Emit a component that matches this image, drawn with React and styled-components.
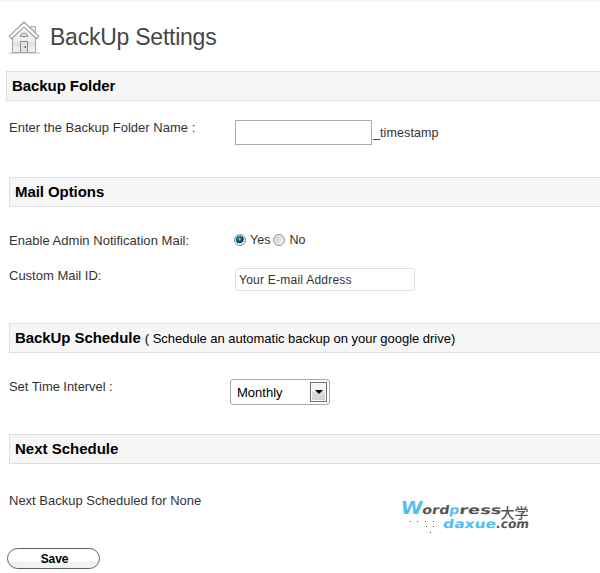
import React from 'react';
import styled, { createGlobalStyle } from 'styled-components';

const GlobalStyle = createGlobalStyle`
  body { margin: 0; background: #fff; overflow: hidden; }
  *, *::before, *::after { box-sizing: border-box; }
`;

const Page = styled.main`
  position: relative;
  width: 600px;
  height: 573px;
  overflow: hidden;
  border-top: 1px solid #f4f4f4;
  background: #fff;
  color: #333;
  font: 13px/16px "Liberation Sans", Arial, sans-serif;
`;

const Header = styled.header`
  display: flex;
  height: 70px;
  padding-left: 8px;
`;

const HouseIcon = styled.svg`
  flex: none;
  width: 33px;
  height: 33px;
  margin-top: 20px;
`;

const Title = styled.h1`
  margin: 21px 0 0 9px;
  color: #464646;
  font-size: 23px;
  line-height: 30px;
  font-weight: 400;
  letter-spacing: -0.24px;
  white-space: nowrap;
`;

const SectionBar = styled.h2`
  height: 30px;
  margin: 0 -2px 0 ${({ $indent = 9 }) => $indent}px;
  padding-left: 5px;
  border: 1px solid #dfdfdf;
  background: #f6f6f6;
  color: #000;
  font-size: 15px;
  line-height: 28px;
  font-weight: 700;
  letter-spacing: ${({ $tracking = -0.07 }) => $tracking}px;
  white-space: nowrap;
`;

const Note = styled.span`
  font-size: 13px;
  font-weight: 400;
  letter-spacing: -0.02px;
`;

const SectionBody = styled.section`
  height: ${({ $height }) => $height}px;
  padding: ${({ $top }) => $top}px 0 0 9px;
`;

const Row = styled.div`
  display: flex;
  height: ${({ $height = 26 }) => $height}px;
  margin-bottom: ${({ $gap = 0 }) => $gap}px;
`;

const Label = styled.label`
  flex: none;
  width: ${({ $width = 226 }) => $width}px;
  padding-top: ${({ $top = 0 }) => $top}px;
  letter-spacing: ${({ $tracking = 0 }) => $tracking}px;
  white-space: nowrap;
`;

const TextField = styled.input`
  width: ${({ $width }) => $width}px;
  height: ${({ $height }) => $height}px;
  margin: 0;
  padding: 0 3px;
  border: 1px solid ${({ $rounded }) => ($rounded ? '#dfdfdf' : '#ababab')};
  border-radius: ${({ $rounded }) => ($rounded ? 3 : 0)}px;
  outline: 0;
  background: #fff;
  color: #333;
  font: 12px/16px "Liberation Sans", Arial, sans-serif;
  letter-spacing: 0.24px;
`;

const Suffix = styled.span`
  padding: 5px 0 0 1px;
  font-size: 12.5px;
  letter-spacing: 0.1px;
`;

const Choice = styled.label`
  display: flex;
  height: 16px;
  margin-right: 4px;
  font-size: 12.5px;
`;

const Radio = styled.input`
  appearance: none;
  width: 12px;
  height: 12px;
  margin: 2px 4px 0 -1px;
  border: 1px solid #8e8f8f;
  border-radius: 50%;
  background: linear-gradient(135deg, #c4c9cd, #f7f7f7);
  box-shadow: inset 0 0 0 1px #f2f2f2;
  &:checked {
    background: radial-gradient(circle at 45% 40%, #7fd0ee 0, #2478a8 20%, #0b3557 40%, #0b3557 48%, #dfe4e8 56%);
  }
`;

const SelectBox = styled.button`
  display: flex;
  justify-content: space-between;
  width: 100px;
  height: 26px;
  padding: 2px 2px 2px 6px;
  border: 1px solid #aaa;
  border-radius: 3px;
  background: #fff;
  color: #000;
  font: 13px/21px "Liberation Sans", Arial, sans-serif;
`;

const SelectArrow = styled.span`
  display: flex;
  align-items: center;
  justify-content: center;
  width: 17px;
  height: 20px;
  border: 1px solid #707070;
  background: linear-gradient(#f4f4f4 0 45%, #dedede 48%, #d0d0d0);
  box-shadow: inset 0 0 0 1px #fafafa;
  &::after {
    content: '';
    border: solid transparent;
    border-width: 4px 4px 0;
    border-top-color: #000;
  }
`;

const SaveButton = styled.button`
  display: block;
  width: 93px;
  height: 21px;
  margin-left: 7px;
  padding: 0 0 0 2px;
  border: 1px solid #606060;
  border-radius: 11px;
  background: linear-gradient(#fff 60%, #f2f2f2 70%);
  color: #000;
  font: bold 12px/18px "Liberation Sans", Arial, sans-serif;
  letter-spacing: -0.1px;
`;

const Watermark = styled.svg`
  position: absolute;
  left: 396px;
  top: 493px;
  width: 140px;
  height: 42px;
  overflow: visible;
`;

const LogoText = styled.text`
  fill: ${({ $blue }) => ($blue ? '#52bff0' : '#555')};
  font: ${({ $weight = 700 }) => $weight} ${({ $size = 13 }) => $size}px "DejaVu Sans", "Noto Sans CJK SC", sans-serif;
`;

const House = () => (
  <HouseIcon viewBox="0 0 33 33" fill="none">
    <path d="M1 32h31" stroke="#bbb" />
    <path d="M22.5 9V5.5h5V14" fill="#eee" stroke="#aaa" />
    <path d="M4.5 15L16 5l11.5 10v16.5h-23z" fill="#efefef" stroke="#a5a5a5" />
    <path d="M5 21h22v5H5z" fill="#e3e3e3" />
    <path d="M2 16.8L16 3.3 30 16.8" stroke="#959595" strokeWidth="4.4" />
    <path d="M2.6 16.2L16 3.6 29.4 16.2" stroke="#fff" strokeWidth="2.4" />
    <path d="M12.5 15.5c0-4.5 7-4.5 7 0z" fill="#ddd" stroke="#8a8a8a" />
    <path d="M12.5 31V20.5h7V31" fill="#e3e3e3" stroke="#8a8a8a" />
    <path d="M16.5 25h1.5v2h-1.5z" fill="#777" />
  </HouseIcon>
);

const Logo = () => (
  <Watermark viewBox="0 0 140 42">
    <g transform="translate(3 0) skewX(-9)">
      <LogoText x="4" y="20" textLength="22" lengthAdjust="spacingAndGlyphs" $size={18} $blue>W</LogoText>
      <LogoText x="26" y="20" textLength="27" lengthAdjust="spacingAndGlyphs" $size={12}>ord</LogoText>
      <LogoText x="53" y="20" textLength="10" lengthAdjust="spacingAndGlyphs" $size={12} $blue>p</LogoText>
      <LogoText x="63" y="20" textLength="42" lengthAdjust="spacingAndGlyphs" $size={12}>ress</LogoText>
      <LogoText x="49" y="34" textLength="53" lengthAdjust="spacingAndGlyphs" $size={12} $blue>daxue</LogoText>
      <LogoText x="102" y="34" textLength="33" lengthAdjust="spacingAndGlyphs" $size={12}>.com</LogoText>
    </g>
    <LogoText x="104.5" y="24" textLength="28" $size={14} $weight={500}>大学</LogoText>
    <path d="M14 27.5h1M21 27.5h1M29 27.5h1M37 27.5h1M30 32.5h1M37 32.5h1M34 38.5h1" stroke="#555" />
  </Watermark>
);

export default function App() {
  return (
    <>
      <GlobalStyle />
      <Page>
        <Header>
          <House />
          <Title>BackUp Settings</Title>
        </Header>
        <SectionBar $indent={6}>Backup Folder</SectionBar>
        <SectionBody $height={76} $top={19}>
          <Row>
            <Label htmlFor="folder" $tracking={0.02}>Enter the Backup Folder Name :</Label>
            <TextField id="folder" $width={137} $height={25} />
            <Suffix>_timestamp</Suffix>
          </Row>
        </SectionBody>
        <SectionBar>Mail Options</SectionBar>
        <SectionBody $height={116} $top={25}>
          <Row $height={16} $gap={20}>
            <Label as="span" $top={1} $tracking={0.03}>Enable Admin Notification Mail:</Label>
            <Choice><Radio type="radio" name="notify" defaultChecked />Yes</Choice>
            <Choice><Radio type="radio" name="notify" />No</Choice>
          </Row>
          <Row>
            <Label htmlFor="email">Custom Mail ID:</Label>
            <TextField id="email" $width={180} $height={23} $rounded defaultValue="Your E-mail Address" />
          </Row>
        </SectionBody>
        <SectionBar>BackUp Schedule <Note>( Schedule an automatic backup on your google drive)</Note></SectionBar>
        <SectionBody $height={81} $top={26}>
          <Row>
            <Label as="span" $width={221} $tracking={-0.06}>Set Time Intervel :</Label>
            <SelectBox type="button">Monthly<SelectArrow /></SelectBox>
          </Row>
        </SectionBody>
        <SectionBar $tracking={0}>Next Schedule</SectionBar>
        <SectionBody $height={84} $top={29}>
          <Label as="span">Next Backup Scheduled for None</Label>
        </SectionBody>
        <SaveButton type="button">Save</SaveButton>
        <Logo />
      </Page>
    </>
  );
}
